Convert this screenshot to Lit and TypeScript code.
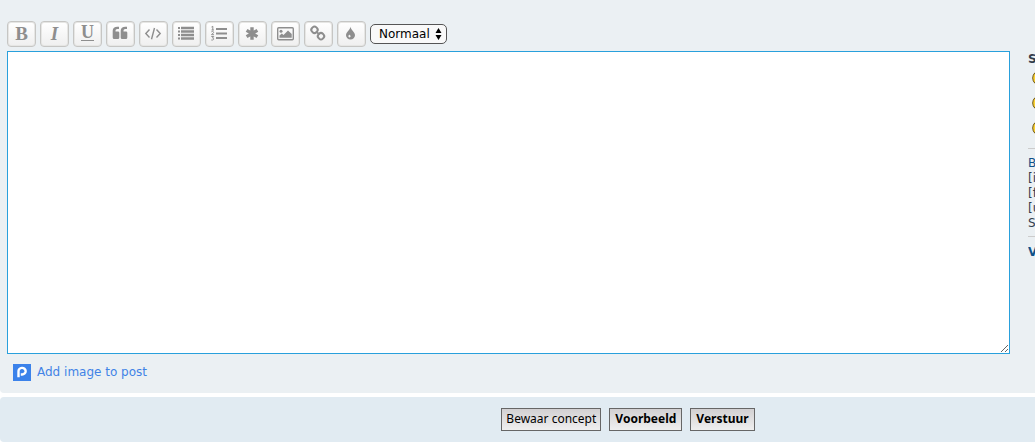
import { LitElement, html, svg, css } from "lit";
import { customElement } from "lit/decorators.js";

const chainRing = (x: number, y: number) => svg`
  <rect x=${x - 3} y=${y - 3} width="6" height="6" rx="2.6" transform="rotate(45 ${x} ${y})"
    fill="none" stroke="currentColor" stroke-width="2"/>`;

const icons: Record<string, unknown> = {
  quote: svg`<path d="M6.700 9.800C6.700 7.400 8.600 5.800 11.400 5.800H13V8H11.400C10 8 9.500 8.700 9.500 10.500H12Q13.300 10.500 13.300 11.800V16.500Q13.300 18 11.900 18H8.200Q6.700 18 6.700 16.500ZM14.700 9.800C14.700 7.400 16.600 5.800 19.400 5.800H21V8H19.400C18 8 17.500 8.700 17.500 10.500H20Q21.300 10.500 21.300 11.800V16.500Q21.300 18 19.900 18H16.200Q14.700 18 14.700 16.500Z" fill="currentColor"/>`,
  code: svg`<path d="M10.500 8.500L6.800 12.500L10.500 16.500M17.500 8.500L21.200 12.500L17.500 16.500M15.500 7L12.500 18.300" fill="none" stroke="currentColor" stroke-width="1.400"/>`,
  list: svg`<path d="M6 6h2v2H6zM6 9.500h2v2H6zM6 13h2v2H6zM6 16.500h2v2H6zM9 5.800H22v2.400H9zM9 9.300H22v2.400H9zM9 12.800H22v2.400H9zM9 16.300H22v2.400H9z" fill="currentColor"/>`,
  numbers: svg`<path d="M11 7h11v2H11zM11 11.500h11v2H11zM11 16h11v2H11z" fill="currentColor"/>
    <path d="M6.500 6L7.800 5.300V9M6.500 9H9M6.300 11C7 10 9 10.300 8.500 11.700L6.500 13.700H9M6.300 15.500H8.700L7.500 17C9.300 17 9.300 19.500 6.300 19" fill="none" stroke="currentColor" stroke-width="1"/>`,
  asterisk: svg`<path d="M14 6.300V18.700M8.600 9.400L19.400 15.600M8.600 15.600L19.400 9.400" stroke="currentColor" stroke-width="3.400" fill="none"/>`,
  image: svg`<rect x="6.700" y="6.700" width="15.600" height="12" rx="1" fill="none" stroke="currentColor" stroke-width="1.400"/>
    <circle cx="10" cy="10.300" r="1.500" fill="currentColor"/>
    <path d="M8.500 16.800V14.500L10.800 12.500L12.500 14L17 9.500L20.700 13V16.800Z" fill="currentColor"/>`,
  link: svg`${chainRing(10.500, 8.800)}${chainRing(17, 15.200)}
    <path d="M12.100 10.400L15.400 13.600" stroke="currentColor" stroke-width="2"/>`,
  drop: svg`<path fill-rule="evenodd" d="M13.500 5.700C13.800 8.800 18 11 18 14.200A4.500 4.200 0 0 1 9 14.200C9 11 13.200 8.800 13.500 5.700ZM12.300 13.500C12 14.200 11.400 14.500 11.400 15.300A1.100 1.100 0 0 0 13.600 15.300C13.600 14.500 12.700 14.200 12.300 13.500Z" fill="currentColor"/>`,
};

const tools = [
  { label: "Vet", letter: "B", cls: "bold" },
  { label: "Cursief", letter: "I", cls: "italic" },
  { label: "Onderstreept", letter: "U", cls: "underline" },
  { label: "Citaat", icon: "quote" },
  { label: "Code", icon: "code" },
  { label: "Lijst", icon: "list" },
  { label: "Genummerde lijst", icon: "numbers" },
  { label: "Lijstitem", icon: "asterisk" },
  { label: "Afbeelding", icon: "image" },
  { label: "Link", icon: "link" },
  { label: "Tekstkleur", icon: "drop" },
];

@customElement("app-root")
export class AppRoot extends LitElement {
  static styles = css`
    :host {
      display: block;
      overflow: hidden;
      background: #fff;
      font: 12px/15px "DejaVu Sans", Verdana, sans-serif;
      color: #333d4d;
    }
    * { box-sizing: border-box; }
    .panel {
      display: grid;
      grid-template-columns: minmax(0, 1fr) 7px;
      column-gap: 18px;
      padding: 21px 0 12px 7px;
      background: #ebf0f3;
      border-radius: 0 0 0 4px;
    }
    .toolbar {
      display: flex;
      align-items: center;
      gap: 4px;
      margin-bottom: 4px;
    }
    .tool {
      display: flex;
      justify-content: center;
      width: 29px;
      height: 26px;
      padding: 0;
      border: 1px solid #c6c6c4;
      border-radius: 4px;
      background: linear-gradient(#fff, #efefef);
      box-shadow: inset 0 0 0 1px #e6e6e4;
      color: #8e8e8e;
      font: bold 19px/24px "Liberation Serif", serif;
    }
    .tool svg { flex: none; width: 29px; height: 26px; margin: -1px; }
    .italic { font-style: italic; }
    .underline {
      font-size: 18px;
      line-height: 21px;
      text-decoration: underline;
      text-decoration-thickness: 1px;
      text-underline-offset: 2px;
    }
    .size { position: relative; display: block; }
    .size select {
      appearance: none;
      display: block;
      width: 77px;
      height: 20px;
      padding: 0 16px 0 8px;
      border: 1px solid #555;
      border-radius: 5px;
      background: #f9f9f9;
      color: #000;
      font: 12px/15px "DejaVu Sans", Verdana, sans-serif;
    }
    .size svg {
      position: absolute;
      right: 5px;
      top: 4px;
      width: 7px;
      height: 12px;
      pointer-events: none;
    }
    textarea {
      display: block;
      width: 100%;
      height: 303px;
      padding: 3px;
      border: 1px solid #29a0dc;
      outline: none;
      background: #fff;
      font: inherit;
      resize: both;
    }
    .upload {
      display: flex;
      width: fit-content;
      align-items: center;
      gap: 6px;
      margin: 10px 0 0 6px;
      color: #4183e6;
      text-decoration: none;
    }
    .upload svg { width: 18px; height: 17px; }
    .side { padding-top: 31px; white-space: nowrap; overflow: hidden; }
    .side p { margin: 0; }
    .title { font-weight: bold; }
    .smilies { display: grid; gap: 9px; padding: 3px 0 0 4px; }
    .smilies svg { display: block; width: 16px; height: 16px; }
    .rules {
      margin: 12px 0 8px;
      padding: 7px 0 5px;
      border: solid #ccc;
      border-width: 1px 0;
    }
    .side a { color: #105289; text-decoration: none; }
    .actions {
      display: flex;
      justify-content: center;
      gap: 8px;
      margin: 4px 0 5px;
      padding: 11px 0;
      padding-left: 221px;
      background: #e1ebf2;
      border-radius: 4px 0 0 4px;
    }
    .action {
      height: 23px;
      padding: 0 4px 2px;
      border: 1px solid #666;
      background: linear-gradient(#d2d0d2, #efefef);
      color: #000;
      font: 12px/15px "Noto Sans", "Lucida Grande", sans-serif;
    }
    .strong { padding: 0 5px 2px; font-weight: bold; }
  `;

  render() {
    return html`
      <section class="panel">
        <div class="editor">
          <div class="toolbar">
            ${tools.map((t) => html`
              <button type="button" class="tool ${t.cls ?? ""}" aria-label=${t.label}>${t.icon
                ? html`<svg viewBox="0 0 29 26" aria-hidden="true">${icons[t.icon]}</svg>`
                : t.letter}</button>`)}
            <label class="size">
              <select aria-label="Lettergrootte">
                <option>Normaal</option>
              </select>
              <svg viewBox="0 0 7 12" aria-hidden="true"><path d="M3.500 0L6.500 5H.5ZM3.500 12L6.500 7H.5Z"/></svg>
            </label>
          </div>
          <textarea aria-label="Bericht"></textarea>
          <a class="upload" href="#">
            <svg viewBox="0 0 18 17" aria-hidden="true">
              <rect width="18" height="17" fill="#3b82ea"/>
              <path d="M5.500 13.300V7.500A3.600 3.300 0 1 1 9.100 10.500H7.800" fill="none" stroke="#fff" stroke-width="2.400"/>
            </svg>
            <span>Add image to post</span>
          </a>
        </div>
        <aside class="side">
          <p class="title">Smilies</p>
          <div class="smilies">
            ${[0, 1, 2].map(() => html`
              <svg viewBox="0 0 16 16" aria-hidden="true">
                <circle cx="8" cy="8" r="7.300" fill="#fbd233" stroke="#6b5416"/>
                <circle cx="5.500" cy="6" r="1"/><circle cx="10.500" cy="6" r="1"/>
                <path d="M4.500 10Q8 13 11.500 10" fill="none" stroke="#000"/>
              </svg>`)}
          </div>
          <div class="rules">
            <p><a href="#">BBCode</a></p>
            <p>[img]</p>
            <p>[flash]</p>
            <p>[url]</p>
            <p>Smilies</p>
          </div>
          <p class="title"><a href="#">Voorbeeld</a></p>
        </aside>
      </section>
      <section class="actions">
        <button type="button" class="action">Bewaar concept</button>
        <button type="button" class="action strong">Voorbeeld</button>
        <button type="button" class="action strong">Verstuur</button>
      </section>
    `;
  }
}
